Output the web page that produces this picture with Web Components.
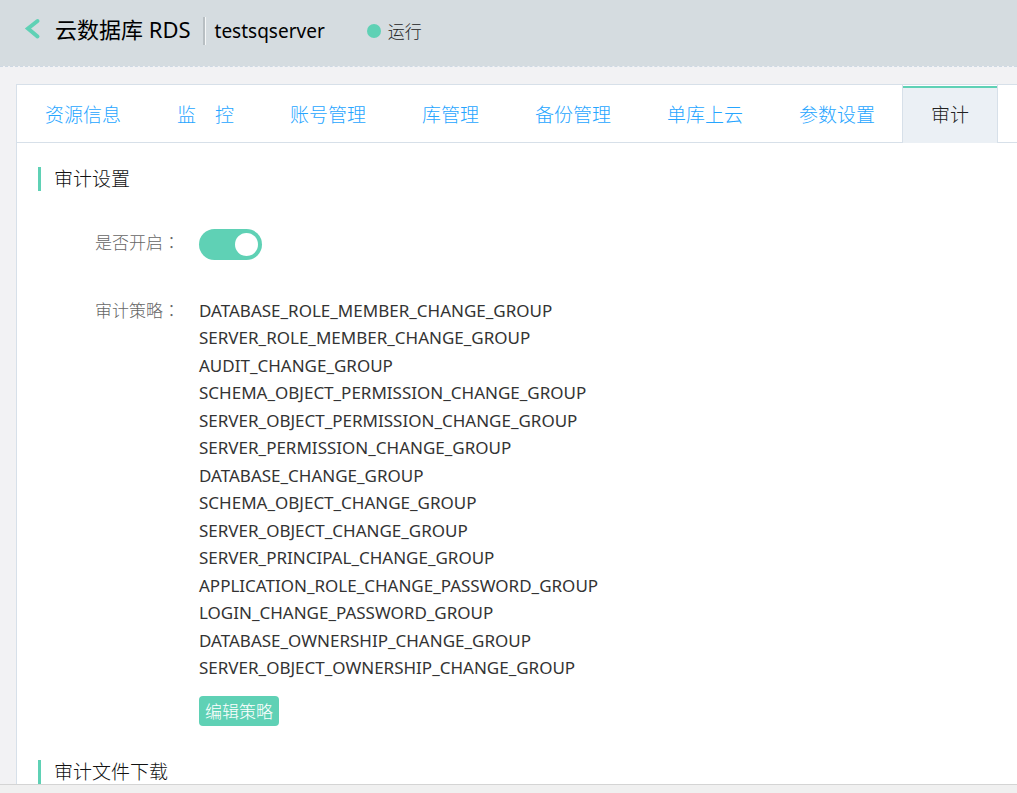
<!DOCTYPE html>
<html lang="zh-CN">
<head>
<meta charset="utf-8">
<meta name="viewport" content="width=device-width, initial-scale=1">
<title>云数据库 RDS - 审计</title>
<style>
  html, body { margin: 0; height: 100%; }
  body {
    --green: #5fd1b5;
    --line: #d7e0e9;
    --blue: #26a5ff;
    background: #f2f2f4;
    color: #222;
    font: 300 17px/27px "Noto Sans", "Noto Sans CJK SC", sans-serif;
    overflow: hidden;
  }
</style>
</head>
<body>
<rds-audit-page></rds-audit-page>

<template id="rds-header">
  <style>
    :host {
      display: flex;
      align-items: center;
      box-sizing: border-box;
      height: 67px;
      padding: 0 24px 4px;
      background: #d5dce0;
      background-clip: padding-box;
      border-bottom: 1px dashed #cdd8e3;
      white-space: nowrap;
    }
    .back { display: flex; width: 31px; }
    h1 { margin: 0; padding-bottom: 4px; font-size: 22px; font-weight: 400; line-height: 30px; color: #000; }
    .name {
      margin-left: 12px;
      padding-left: 10px;
      border-left: 2px solid #b8bfc3;
      box-shadow: inset 1px 0 #f5f7f8;
      font-size: 19px;
      font-weight: 400;
      line-height: 28px;
      color: #000;
    }
    .state { display: flex; align-items: center; gap: 7px; margin-left: 42px; }
    .state::before { content: ""; width: 14px; height: 14px; border-radius: 50%; background: var(--green); }
  </style>
  <a class="back" href="#back" aria-label="返回">
    <svg width="18" height="26" viewBox="0 0 18 26" fill="none" stroke="#5fd1b5" stroke-width="4" stroke-linecap="round"><path d="M13.500 3 4 10.500l9.500 8"/></svg>
  </a>
  <h1><slot></slot></h1>
  <span class="name"><slot name="name"></slot></span>
  <span class="state"><slot name="state"></slot></span>
</template>

<template id="rds-tabs">
  <style>
    :host { display: flex; height: 57px; border-bottom: 1px solid var(--line); }
  </style>
  <slot></slot>
</template>

<template id="rds-tab">
  <style>
    :host { display: block; flex: none; }
    a {
      display: block;
      height: 57px;
      padding: 0 28px;
      font-size: 19px;
      line-height: 60px;
      color: var(--blue);
      text-decoration: none;
      white-space: nowrap;
    }
    :host([active]) {
      margin: 0 -1px;
      padding-top: 1px;
      border: solid var(--line);
      border-width: 0 1px;
      background: linear-gradient(#fff 1px, #ebf0f5 1px);
      height: 57px;
    }
    :host([active]) a { box-sizing: border-box; border-top: 2px solid var(--green); line-height: 54px; color: #222; background: #ebf0f5; }
  </style>
  <a><slot></slot></a>
</template>

<template id="rds-section">
  <style>
    :host { display: block; }
    h2 {
      margin: 0;
      padding-left: 13px;
      border-left: 3px solid var(--green);
      font-size: 19px;
      font-weight: 300;
      line-height: 24px;
      color: #111;
    }
    .body { display: grid; gap: 37px; padding: 38px 0 34px 57px; }
  </style>
  <h2><slot name="title"></slot></h2>
  <div class="body"><slot></slot></div>
</template>

<template id="rds-field">
  <style>
    :host { display: grid; grid-template-columns: 104px 1fr; align-items: start; }
    .label { line-height: 25px; color: #666; white-space: nowrap; }
    .value { display: grid; gap: 14px; justify-items: start; }
  </style>
  <div class="label"><slot name="label"></slot></div>
  <div class="value"><slot></slot></div>
</template>

<template id="rds-audit-page">
  <style>
    :host { display: grid; grid-template-rows: auto 1fr 9px; height: 100vh; }
    main { display: flex; min-height: 0; overflow: hidden; padding: 17px 0 0 16px; }
    .panel { flex: 1; min-width: 0; background: #fff; border: solid var(--line); border-width: 1px 0 0 1px; }
    .content { padding: 24px 21px; }
    footer { box-sizing: border-box; background: #f0f0f0; border-top: 1px solid #d4d4d4; }
    .colon { font-family: "Noto Sans CJK TC", sans-serif; }
    input {
      appearance: none;
      display: flex;
      align-items: center;
      justify-content: flex-end;
      box-sizing: border-box;
      width: 63px;
      height: 31px;
      margin: 0;
      padding: 0 4px;
      border-radius: 16px;
      background: var(--green);
    }
    input::before { content: ""; width: 23px; height: 23px; border-radius: 50%; background: #fff; }
    input:not(:checked) { justify-content: flex-start; background: #ccc; }
    ul { display: grid; grid-auto-rows: 27px 28px; margin: 0; padding: 0; list-style: none; font-weight: 400; color: #333; }
    button {
      height: 30px;
      padding: 0 6px;
      border: 0;
      border-radius: 4px;
      background: var(--green);
      color: #fff;
      font: inherit;
    }
  </style>
  <rds-header>云数据库 RDS<span slot="name">testsqserver</span><span slot="state">运行</span></rds-header>
  <main>
    <div class="panel">
      <rds-tabs>
        <rds-tab href="#info">资源信息</rds-tab>
        <rds-tab href="#monitor">监　控</rds-tab>
        <rds-tab href="#account">账号管理</rds-tab>
        <rds-tab href="#database">库管理</rds-tab>
        <rds-tab href="#backup">备份管理</rds-tab>
        <rds-tab href="#migrate">单库上云</rds-tab>
        <rds-tab href="#params">参数设置</rds-tab>
        <rds-tab href="#audit" active>审计</rds-tab>
      </rds-tabs>
      <div class="content">
        <rds-section>
          <span slot="title">审计设置</span>
          <rds-field>
            <label slot="label" for="enabled">是否开启<span class="colon" lang="zh-Hant">：</span></label>
            <input id="enabled" type="checkbox" checked>
          </rds-field>
          <rds-field>
            <span slot="label">审计策略<span class="colon" lang="zh-Hant">：</span></span>
            <ul>
              <li>DATABASE_ROLE_MEMBER_CHANGE_GROUP</li>
              <li>SERVER_ROLE_MEMBER_CHANGE_GROUP</li>
              <li>AUDIT_CHANGE_GROUP</li>
              <li>SCHEMA_OBJECT_PERMISSION_CHANGE_GROUP</li>
              <li>SERVER_OBJECT_PERMISSION_CHANGE_GROUP</li>
              <li>SERVER_PERMISSION_CHANGE_GROUP</li>
              <li>DATABASE_CHANGE_GROUP</li>
              <li>SCHEMA_OBJECT_CHANGE_GROUP</li>
              <li>SERVER_OBJECT_CHANGE_GROUP</li>
              <li>SERVER_PRINCIPAL_CHANGE_GROUP</li>
              <li>APPLICATION_ROLE_CHANGE_PASSWORD_GROUP</li>
              <li>LOGIN_CHANGE_PASSWORD_GROUP</li>
              <li>DATABASE_OWNERSHIP_CHANGE_GROUP</li>
              <li>SERVER_OBJECT_OWNERSHIP_CHANGE_GROUP</li>
            </ul>
            <button type="button">编辑策略</button>
          </rds-field>
        </rds-section>
        <rds-section><span slot="title">审计文件下载</span></rds-section>
      </div>
    </div>
  </main>
  <footer></footer>
</template>

<script>
  class RdsElement extends HTMLElement {
    constructor() {
      super();
      const template = document.getElementById(this.localName);
      this.attachShadow({ mode: "open" }).append(template.content.cloneNode(true));
    }
  }
  class RdsTab extends RdsElement {
    connectedCallback() {
      const link = this.shadowRoot.querySelector("a");
      link.href = this.getAttribute("href");
      if (this.hasAttribute("active")) link.setAttribute("aria-current", "page");
    }
  }
  customElements.define("rds-header", class extends RdsElement {});
  customElements.define("rds-tabs", class extends RdsElement {});
  customElements.define("rds-tab", RdsTab);
  customElements.define("rds-section", class extends RdsElement {});
  customElements.define("rds-field", class extends RdsElement {});
  customElements.define("rds-audit-page", class extends RdsElement {});
</script>
</body>
</html>
